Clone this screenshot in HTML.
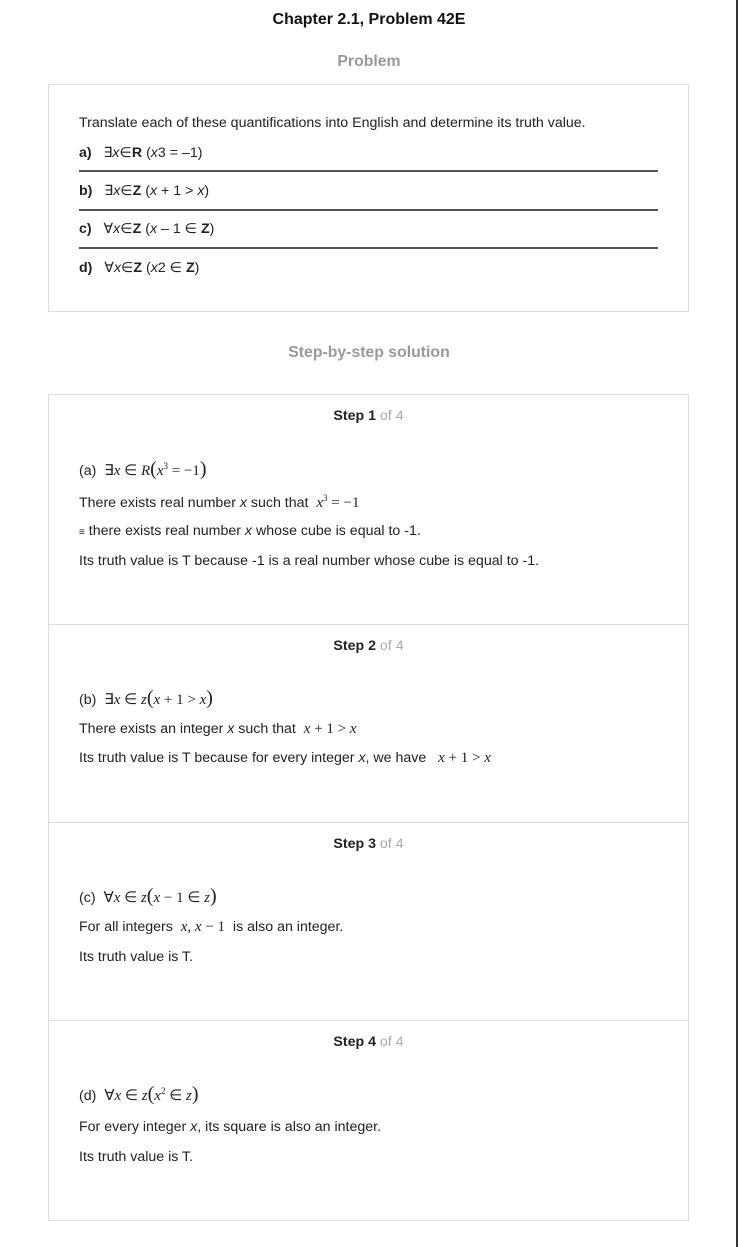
<!DOCTYPE html>
<html><head><style>
body{margin:0;width:738px;height:1247px;background:#fff;font-family:"Liberation Sans",Arial,sans-serif;font-size:14.2px;color:#222;position:relative;overflow:hidden}
.a{position:absolute;white-space:nowrap}
.rb{position:absolute;right:0;top:0;width:2px;height:1247px;background:#333}
.box{position:absolute;left:48px;width:639px;border:1px solid #ddd}
.hl{position:absolute;left:79px;width:579px;height:2px;background:#555}
.m{font-family:"Liberation Serif","Times New Roman",serif;font-size:15px}
.st{position:absolute;left:48px;width:641px;text-align:center;font-weight:bold;font-size:14.2px}
.st span{color:#aaa;font-weight:normal}
.sep{position:absolute;left:49px;width:639px;height:1px;background:#ddd}
b{font-weight:bold}
</style></head><body>
<div class="rb"></div>
<div class="a" style="left:0;width:738px;text-align:center;top:11px;font-size:16px;font-weight:bold;color:#111">Chapter 2.1, Problem 42E</div>
<div class="a" style="left:0;width:738px;text-align:center;top:53px;font-size:15.8px;font-weight:bold;color:#999">Problem</div>
<div class="box" style="top:84px;height:226px"></div>
<div class="a" style="left:79px;top:115px">Translate each of these quantifications into English and determine its truth value.</div>
<div class="a" style="left:79px;top:145px"><b>a)</b>&nbsp;&nbsp;&nbsp;∃<i>x</i>∈<b>R</b> (<i>x</i>3 = –1)</div>
<div class="hl" style="top:170px"></div>
<div class="a" style="left:79px;top:183px"><b>b)</b>&nbsp;&nbsp;&nbsp;∃<i>x</i>∈<b>Z</b> (<i>x</i> + 1 &gt; <i>x</i>)</div>
<div class="hl" style="top:209px"></div>
<div class="a" style="left:79px;top:221px"><b>c)</b>&nbsp;&nbsp;&nbsp;∀<i>x</i>∈<b>Z</b> (<i>x</i> – 1 ∈ <b>Z</b>)</div>
<div class="hl" style="top:247px"></div>
<div class="a" style="left:79px;top:260px"><b>d)</b>&nbsp;&nbsp;&nbsp;∀<i>x</i>∈<b>Z</b> (<i>x</i>2 ∈ <b>Z</b>)</div>

<div class="a" style="left:0;width:738px;text-align:center;top:344px;font-size:15.8px;font-weight:bold;color:#999">Step-by-step solution</div>
<div class="box" style="top:394px;height:825px"></div>
<div class="sep" style="top:624px"></div>
<div class="sep" style="top:822px"></div>
<div class="sep" style="top:1020px"></div>

<div class="st" style="top:408px">Step 1 <span>of 4</span></div>
<div class="a" style="left:79px;top:458px">(a)&nbsp; <span class="m">∃<i>x</i> ∈ <i>R</i><span style="font-size:20px">(</span><i>x</i><sup style="font-size:9px">3</sup> = −1<span style="font-size:20px">)</span></span></div>
<div class="a" style="left:79px;top:493px">There exists real number <i>x</i> such that &nbsp;<span class="m"><i>x</i><sup style="font-size:9px">3</sup> = −1</span></div>
<div class="a" style="left:79px;top:523px"><span style="font-size:10px">≡</span> there exists real number <i>x</i> whose cube is equal to -1.</div>
<div class="a" style="left:79px;top:553px">Its truth value is T because -1 is a real number whose cube is equal to -1.</div>

<div class="st" style="top:638px">Step 2 <span>of 4</span></div>
<div class="a" style="left:79px;top:687px">(b)&nbsp; <span class="m">∃<i>x</i> ∈ <i>z</i><span style="font-size:20px">(</span><i>x</i> + 1 &gt; <i>x</i><span style="font-size:20px">)</span></span></div>
<div class="a" style="left:79px;top:721px">There exists an integer <i>x</i> such that &nbsp;<span class="m"><i>x</i> + 1 &gt; <i>x</i></span></div>
<div class="a" style="left:79px;top:750px">Its truth value is T because for every integer <i>x</i>, we have &nbsp;&nbsp;<span class="m"><i>x</i> + 1 &gt; <i>x</i></span></div>

<div class="st" style="top:836px">Step 3 <span>of 4</span></div>
<div class="a" style="left:79px;top:885px">(c)&nbsp; <span class="m">∀<i>x</i> ∈ <i>z</i><span style="font-size:20px">(</span><i>x</i> − 1 ∈ <i>z</i><span style="font-size:20px">)</span></span></div>
<div class="a" style="left:79px;top:919px">For all integers &nbsp;<span class="m"><i>x</i>, <i>x</i> − 1</span> &nbsp;is also an integer.</div>
<div class="a" style="left:79px;top:949px">Its truth value is T.</div>

<div class="st" style="top:1034px">Step 4 <span>of 4</span></div>
<div class="a" style="left:79px;top:1083px">(d)&nbsp; <span class="m">∀<i>x</i> ∈ <i>z</i><span style="font-size:20px">(</span><i>x</i><sup style="font-size:9px">2</sup> ∈ <i>z</i><span style="font-size:20px">)</span></span></div>
<div class="a" style="left:79px;top:1119px">For every integer <i>x</i>, its square is also an integer.</div>
<div class="a" style="left:79px;top:1149px">Its truth value is T.</div>
</body></html>
